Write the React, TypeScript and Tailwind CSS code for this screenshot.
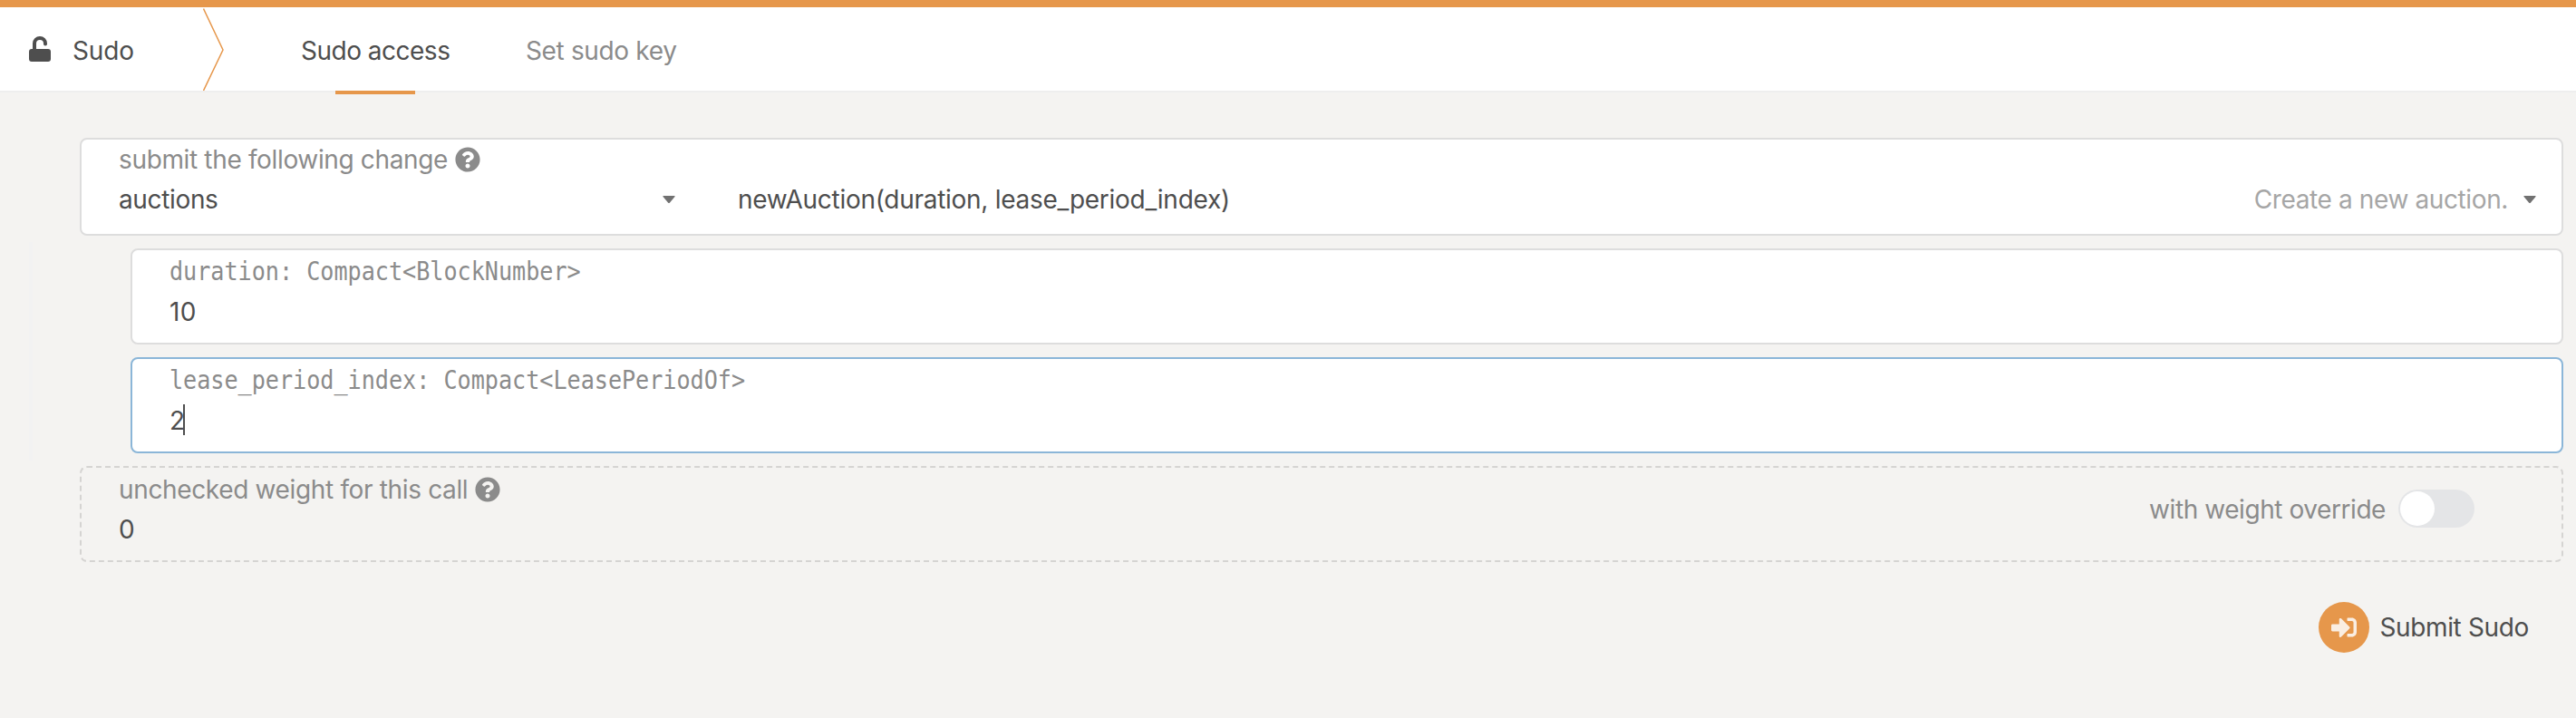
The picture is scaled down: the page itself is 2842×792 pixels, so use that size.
import type { ReactNode } from 'react';
import { FaQuestionCircle, FaSignInAlt } from 'react-icons/fa';

function Label({ children }: { children: ReactNode }) {
  return (
    <div className="flex h-8 items-center gap-2 whitespace-nowrap text-[#8b8b8b]">
      {children}
      <FaQuestionCircle size={28} />
    </div>
  );
}

function TypeLabel({ children }: { children: ReactNode }) {
  return (
    <div className="h-8 w-max origin-left scale-x-[0.897] whitespace-nowrap font-['DejaVu_Sans_Mono',monospace] tracking-normal text-[#8b8b8b]">
      {children}
    </div>
  );
}

function Caret() {
  return (
    <svg width="14" height="8" viewBox="0 0 14 8" className="shrink-0 fill-[#717171]">
      <path d="M1 0h12q1.200 0 .5 1L8 7.500q-1 1-2 0L.5 1Q-.2 0 1 0z" />
    </svg>
  );
}

export default function App() {
  return (
    <div className="flex h-[792px] w-[2842px] flex-col overflow-hidden bg-[#f4f3f1] font-['Inter',sans-serif] text-[28px] leading-8 tracking-[-0.35px] text-[#4e4e4e]">
      <div className="h-2 shrink-0 bg-[#e6974b]" />
      <header className="flex h-[94px] shrink-0 border-b-2 border-[#eeeeee] bg-white">
        <div className="flex w-[224px] items-center pl-8">
          <svg width="24" height="28" viewBox="0 0 24 28" className="shrink-0 fill-[#4e4e4e]">
            <path d="M4 14V8a8 8 0 0 1 16 0v.5a2 2 0 0 1-4 0V8a4 4 0 0 0-8 0v6h13a3 3 0 0 1 3 3v8a3 3 0 0 1-3 3H3a3 3 0 0 1-3-3v-8a3 3 0 0 1 3-3z" />
          </svg>
          <span className="ml-[24px] pt-1 tracking-[-0.1px]">Sudo</span>
        </div>
        <svg width="24" height="92" viewBox="0 0 24 92" className="shrink-0 fill-none stroke-[#e6974b]">
          <path d="M.5 1.500L22 47L.5 92" strokeWidth="1.500" />
        </svg>
        <div className="relative ml-[84px] flex w-[164px] items-center whitespace-nowrap pt-1 tracking-[-0.5px]">
          Sudo access
          <div className="absolute left-[38px] top-[92px] h-1 w-[88px] bg-[#e6974b]" />
        </div>
        <div className="ml-[84px] flex items-center whitespace-nowrap pt-1 text-[#8b8b8b]">Set sudo key</div>
      </header>
      <main className="flex flex-col pl-[88px] pr-[14px] pt-[50px]">
        <section className="h-[108px] rounded-lg border-2 border-[#dddddd] bg-white pl-[41px] pr-7 pt-1.5">
          <Label>submit the following change</Label>
          <div className="mt-3 flex h-8 items-center whitespace-nowrap">
            <span className="w-[600px]">auctions</span>
            <Caret />
            <span className="ml-[69px] tracking-[-0.28px]">newAuction(duration, lease_period_index)</span>
            <span className="ml-auto mr-[17px] tracking-[-0.38px] text-[#a6a6a6]">Create a new auction.</span>
            <Caret />
          </div>
        </section>
        <div className="-ml-14 mt-[7px] border-l-4 border-[#f2f2f2] pb-2 pl-[108px] pt-[7px]">
          <section className="h-[106px] rounded-lg border-2 border-[#dddddd] bg-white pl-[41px] pt-2">
            <TypeLabel>duration: Compact&lt;BlockNumber&gt;</TypeLabel>
            <div className="mt-3 tracking-[0.4px]">10</div>
          </section>
          <section className="mt-[14px] h-[106px] rounded-lg border-2 border-[#8bb6d8] bg-white pl-[41px] pt-2">
            <TypeLabel>lease_period_index: Compact&lt;LeasePeriodOf&gt;</TypeLabel>
            <div className="mt-2.5 flex h-[34px] items-center">
              <span className="w-[15px] pt-0.5">2</span>
              <span className="h-[34px] w-0.5 shrink-0 bg-[#4e4e4e]" />
            </div>
          </section>
        </div>
        <section className="mt-1.5 flex h-[106px] rounded-lg border-2 border-dashed border-[#d5d4d2] pl-[41px] pr-[96px] pt-2">
          <div className="flex-1">
            <Label>unchecked weight for this call</Label>
            <div className="mt-3">0</div>
          </div>
          <div className="mt-4 flex h-[42px] items-center text-[#8b8b8b]">
            <span className="mr-[14px] whitespace-nowrap pt-0.5 tracking-[-0.43px]">with weight override</span>
            <div className="h-[42px] w-[84px] rounded-full bg-[#e4e5e7] p-0.5">
              <div className="size-[38px] rounded-full bg-white" />
            </div>
          </div>
        </section>
        <div className="mr-[38px] mt-[44px] flex h-14 items-center justify-end">
          <div className="flex size-14 items-center justify-center rounded-full bg-[#e6974b] text-[#faeee2]">
            <FaSignInAlt size={28} />
          </div>
          <span className="ml-[11px] whitespace-nowrap">Submit Sudo</span>
        </div>
      </main>
    </div>
  );
}
